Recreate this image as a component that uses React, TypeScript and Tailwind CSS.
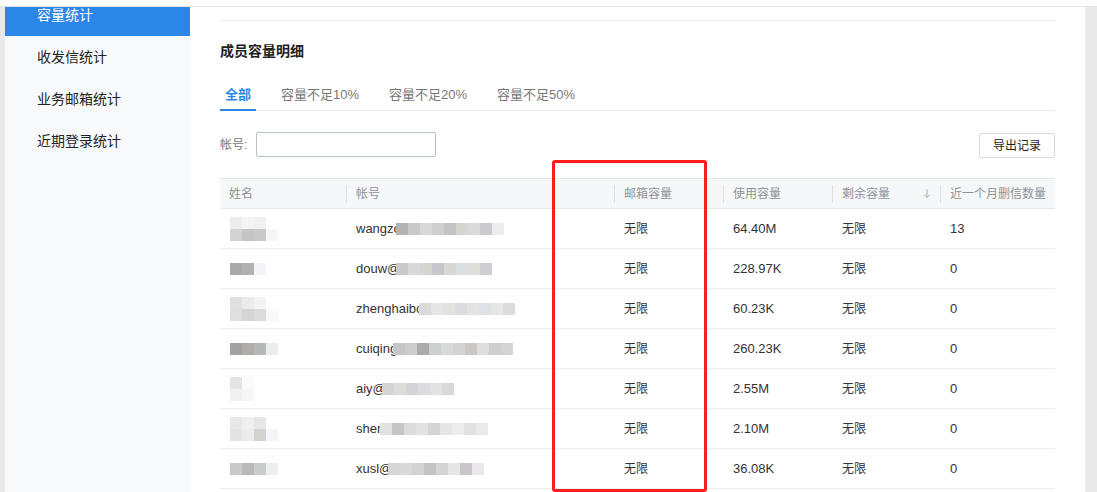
import React from 'react'

type Row = {
  name: string[][]
  account: string
  mask: string[]
  quota: string
  used: string
  left: string
  deleted: string
}

const rows: Row[] = [
  {
    name: [
      ['#ededed', '#f4f4f4', '#f1f1f1', '#ffffff'],
      ['#d2d2d2', '#c5c5c5', '#c9c9c9', '#f4f7f9'],
    ],
    account: 'wangzc',
    mask: ['#b5b3b1', '#c9c9cb', '#d8d8d8', '#cfcfcd', '#c4c4c6', '#d6d6d1', '#dadada', '#cbcbcf', '#ededed'],
    quota: '无限',
    used: '64.40M',
    left: '无限',
    deleted: '13',
  },
  {
    name: [['#a9a9a9', '#b1b1af', '#f3f5f9']],
    account: 'douw@',
    mask: ['#cacaca', '#d9d9db', '#d7d5d0', '#c6c6cb', '#d8d8d3', '#d9dee3', '#deded8', '#cfccd2'],
    quota: '无限',
    used: '228.97K',
    left: '无限',
    deleted: '0',
  },
  {
    name: [
      ['#e0e0e0', '#ebebeb', '#f4f4f4', '#ffffff'],
      ['#dfdfdf', '#d5d5d5', '#dbdbdb', '#f6f8f9'],
    ],
    account: 'zhenghaibo',
    mask: ['#dadada', '#e6e6e8', '#e2e2e0', '#dcdce0', '#e3e3e3', '#dee2e6', '#e6e6e4', '#dcdcdc'],
    quota: '无限',
    used: '60.23K',
    left: '无限',
    deleted: '0',
  },
  {
    name: [['#a2a2a2', '#b0aca8', '#b5b8b5', '#e9edef']],
    account: 'cuiqing',
    mask: ['#c6c6c6', '#cccccc', '#acacac', '#cfcfcf', '#d6dada', '#d3d3d3', '#c9c7c4', '#dedede', '#cfcfd1', '#d4d4d4'],
    quota: '无限',
    used: '260.23K',
    left: '无限',
    deleted: '0',
  },
  {
    name: [
      ['#e4e4e4', '#fafafa'],
      ['#f0f0f0', '#f6f6f6'],
    ],
    account: 'aiy@',
    mask: ['#d4d4d4', '#dcdcd8', '#d6d4d9', '#dcdce0', '#e2e2e2', '#d8d8d8'],
    quota: '无限',
    used: '2.55M',
    left: '无限',
    deleted: '0',
  },
  {
    name: [
      ['#e8e8e8', '#efefef', '#e6e6e6', '#ffffff'],
      ['#e3e3e3', '#ececec', '#d4d2cf', '#f2f5f8'],
    ],
    account: 'shen',
    mask: ['#e1e1e1', '#c6c6c6', '#dcdcdc', '#e2e2e2', '#d4d4d4', '#e6e6e6', '#ececec', '#e1e1e1', '#eaeaea'],
    quota: '无限',
    used: '2.10M',
    left: '无限',
    deleted: '0',
  },
  {
    name: [['#c9c9c9', '#b9b9b9', '#c8cccc', '#eeeeee']],
    account: 'xusl@',
    mask: ['#d6d6d6', '#d9d9d9', '#d2d2d2', '#c4c4c4', '#d4d4d4', '#e6e6e6', '#c9c5cb', '#e9e9ec'],
    quota: '无限',
    used: '36.08K',
    left: '无限',
    deleted: '0',
  },
]

const menu = ['容量统计', '收发信统计', '业务邮箱统计', '近期登录统计']
const tabs = ['全部', '容量不足10%', '容量不足20%', '容量不足50%']

function Mosaic({ cells }: { cells: string[][] }) {
  return (
    <div className="flex flex-col">
      {cells.map((line, i) => (
        <div key={i} className="flex">
          {line.map((c, j) => (
            <span key={j} className="block h-[12px] w-[12px]" style={{ background: c }} />
          ))}
        </div>
      ))}
    </div>
  )
}

function HeadCell({ label, w, first, sort }: { label: string; w: string; first?: boolean; sort?: boolean }) {
  return (
    <div className={`${w} flex h-full items-center`}>
      {!first && <span className="h-[18px] w-px bg-[#dcdfe6]" />}
      <span className="flex flex-1 items-center pl-[9px] pr-[9px]">
        <span className="flex-1">{label}</span>
        {sort && (
          <svg width="8" height="10" viewBox="0 0 8 10" className="text-[#a8abb2]">
            <path d="M4 0.5v8M1 5.5l3 3 3-3" fill="none" stroke="currentColor" strokeWidth="1" />
          </svg>
        )}
      </span>
    </div>
  )
}

export default function App() {
  return (
    <div className="flex h-[492px] w-[1097px] flex-col overflow-hidden bg-white font-['Liberation_Sans','Noto_Sans_CJK_SC',sans-serif] text-[12px] text-[#333]">
      <div className="h-[7px] shrink-0 border-b border-[#e3e3e3]" />
      <div className="flex min-h-0 flex-1">
        <div className="w-[5px] shrink-0 bg-[#e8e8e8]" />

        <aside className="w-[185px] shrink-0 overflow-hidden bg-[#f7f9fb]">
          <ul className="-mt-[13px]">
            {menu.map((m, i) => (
              <li
                key={m}
                className={`flex h-[42px] items-center pl-[32px] text-[14px] ${
                  i === 0 ? 'bg-[#2b86e7] text-white' : 'text-[#222]'
                }`}
              >
                {m}
              </li>
            ))}
          </ul>
        </aside>

        <main className="relative min-w-0 flex-1 px-[30px]">
          <div className="h-[14px] border-b border-[#ececec]" />

          <h3 className="mt-[20px] text-[14px] font-bold leading-[20px] text-[#222]">成员容量明细</h3>

          <div className="mt-[19px] flex border-b border-[#e6e8eb] text-[13px]">
            {tabs.map((t, i) => (
              <div
                key={t}
                className={`-mb-px mr-[20px] flex h-[31px] items-center border-b-2 px-[5px] ${
                  i === 0 ? 'border-[#2b86e7] font-bold text-[#2b86e7]' : 'border-transparent text-[#777]'
                }`}
              >
                {t}
              </div>
            ))}
          </div>

          <div className="mt-[20px] flex items-center justify-between">
            <label className="flex items-center text-[#777]">
              <span className="w-[36px]">帐号:</span>
              <input className="h-[25px] w-[180px] rounded-[2px] border border-[#b6c0cc] outline-none" />
            </label>
            <button className="mt-[2px] h-[25px] w-[76px] rounded-[2px] border border-[#d9d9d9] bg-white text-[12px] text-[#222]">
              导出记录
            </button>
          </div>

          <div className="mt-[20px]">
            <div className="flex h-[31px] items-center border-y border-[#e4e7ed] bg-[#f6f7f9] text-[#8f9399]">
              <HeadCell label="姓名" w="w-[126px]" first />
              <HeadCell label="帐号" w="w-[268px]" />
              <HeadCell label="邮箱容量" w="w-[109px]" />
              <HeadCell label="使用容量" w="w-[109px]" />
              <HeadCell label="剩余容量" w="w-[108px]" sort />
              <HeadCell label="近一个月删信数量" w="flex-1" />
            </div>

            {rows.map((r) => (
              <div key={r.account} className="flex h-[40px] items-center border-b border-[#eceef2]">
                <div className="w-[126px] pl-[10px]">
                  <Mosaic cells={r.name} />
                </div>
                <div className="flex w-[268px] items-center pl-[10px] text-[13px]">
                  <span>{r.account}</span>
                  <span className="-ml-[4px]">
                    <Mosaic cells={[r.mask]} />
                  </span>
                </div>
                <div className="w-[109px] pl-[10px]">{r.quota}</div>
                <div className="w-[109px] pl-[10px] text-[13px]">{r.used}</div>
                <div className="w-[108px] pl-[10px]">{r.left}</div>
                <div className="flex-1 pl-[10px] text-[13px]">{r.deleted}</div>
              </div>
            ))}
          </div>

          <div className="absolute left-[362px] top-[153px] h-[332px] w-[155px] rounded-[3px] border-[3px] border-[#ff1c1c]" />
        </main>

        <div className="w-[12px] shrink-0 bg-[#e9e9e9]" />
      </div>
    </div>
  )
}
